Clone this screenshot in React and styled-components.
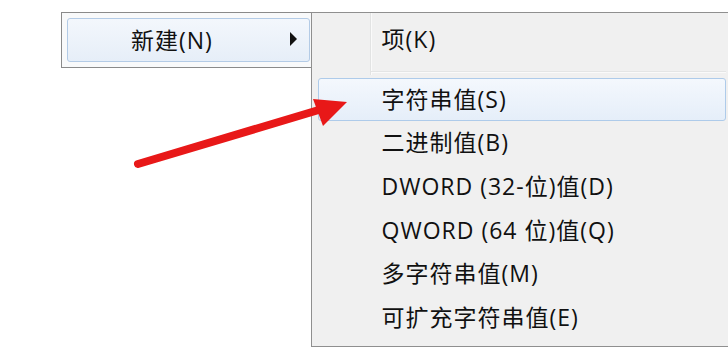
import React from "react";
import styled, { createGlobalStyle } from "styled-components";

const GlobalStyle = createGlobalStyle`
  html, body {
    margin: 0;
    padding: 0;
    background: #ffffff;
  }
  body {
    font-family: "Open Sans", "Noto Sans CJK SC", sans-serif;
    color: #111;
  }
`;

const subItems = [
  { label: "字符串值(S)", active: true },
  { label: "二进制值(B)" },
  { label: "DWORD (32-位)值(D)" },
  { label: "QWORD (64 位)值(Q)" },
  { label: "多字符串值(M)" },
  { label: "可扩充字符串值(E)" },
];

const App = () => {
  return (
    <>
      <GlobalStyle />
      <Page>
        <ParentMenu>
          <ParentItem>
            <span>新建(N)</span>
            <Caret />
          </ParentItem>
        </ParentMenu>
        <SubMenu>
          <SubItem>项(K)</SubItem>
          <Separator />
          {subItems.map((item) => (
            <SubItem key={item.label} $active={item.active}>
              {item.label}
            </SubItem>
          ))}
        </SubMenu>
        <Arrow viewBox="0 0 728 364" width="728" height="364">
          <line
            x1="138"
            y1="164"
            x2="322"
            y2="109"
            stroke="#e81818"
            strokeWidth="8"
            strokeLinecap="round"
          />
          <polygon points="313,99 347,102 323,126" fill="#e81818" />
        </Arrow>
      </Page>
    </>
  );
};

const Page = styled.div`
  position: relative;
  width: 728px;
  height: 364px;
  overflow: hidden;
  display: flex;
  align-items: flex-start;
  padding: 12px 0 0 61px;
  box-sizing: border-box;
`;

const ParentMenu = styled.div`
  width: 251px;
  box-sizing: border-box;
  padding: 5px 1px 5px 5px;
  background: #f8f9fa;
  border: 1px solid #8a8a8a;
  border-right: none;
`;

const ParentItem = styled.div`
  height: 44px;
  box-sizing: border-box;
  display: flex;
  align-items: center;
  justify-content: space-between;
  padding: 0 12px 0 63px;
  border: 1px solid #b3cbe6;
  border-radius: 3px;
  background: linear-gradient(#f3f7fc, #e6eef8);
  font-size: 23px;
  letter-spacing: 1px;
  line-height: 1;
`;

const Caret = styled.span`
  width: 0;
  height: 0;
  margin-top: -2px;
  border-top: 7px solid transparent;
  border-bottom: 7px solid transparent;
  border-left: 7px solid #111;
`;

const SubMenu = styled.div`
  position: relative;
  width: 420px;
  height: 335px;
  box-sizing: border-box;
  padding: 5px 2px 0 6px;
  background: #f0f0f0;
  border: 1px solid #8f8f8f;
  border-right: none;
  display: flex;
  flex-direction: column;

  &::before {
    content: "";
    position: absolute;
    top: 0;
    height: 62px;
    left: 58px;
    width: 1px;
    background: #e2e3e3;
    box-shadow: 1px 0 0 #fafafa;
  }
`;

const SubItem = styled.div`
  position: relative;
  height: 43.6px;
  flex-shrink: 0;
  box-sizing: border-box;
  display: flex;
  align-items: center;
  padding-left: 63px;
  font-size: 23px;
  letter-spacing: 1px;
  line-height: 1;
  border: 1px solid ${(p) => (p.$active ? "#aecbea" : "transparent")};
  border-radius: 3px;
  background: ${(p) =>
    p.$active ? "linear-gradient(#f4f8fd, #e5eef9)" : "transparent"};
`;

const Separator = styled.div`
  position: relative;
  height: 16px;
  flex-shrink: 0;
  margin-left: 53px;

  &::after {
    content: "";
    position: absolute;
    left: 0;
    right: 0;
    top: 9px;
    height: 1px;
    background: #e4e5e5;
    box-shadow: 0 1px 0 #fafafa;
  }
`;

const Arrow = styled.svg`
  position: absolute;
  left: 0;
  top: 0;
  pointer-events: none;
`;

export default App;
